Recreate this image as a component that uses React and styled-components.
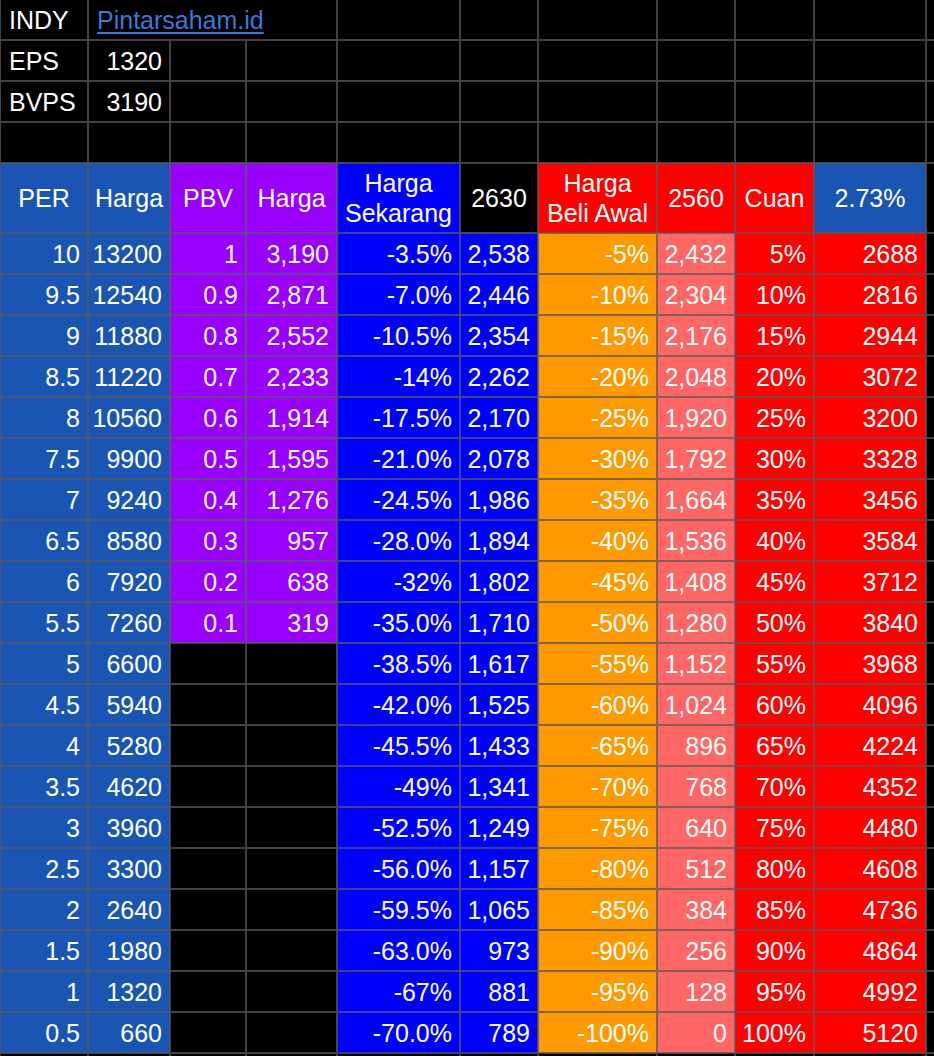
import styled, { createGlobalStyle } from "styled-components";

const GlobalStyle = createGlobalStyle`
  html, body {
    margin: 0;
    padding: 0;
    background: #000;
    overflow: hidden;
  }
`;

const COLORS = {
  steel: "#1b55b4",
  purple: "#9900ff",
  blue: "#0000ff",
  orange: "#ff9900",
  salmon: "#ff6666",
  red: "#ff0000",
  black: "#000000",
};

const per = ["10", "9.5", "9", "8.5", "8", "7.5", "7", "6.5", "6", "5.5", "5", "4.5", "4", "3.5", "3", "2.5", "2", "1.5", "1", "0.5"];
const hargaPer = ["13200", "12540", "11880", "11220", "10560", "9900", "9240", "8580", "7920", "7260", "6600", "5940", "5280", "4620", "3960", "3300", "2640", "1980", "1320", "660"];
const pbv = ["1", "0.9", "0.8", "0.7", "0.6", "0.5", "0.4", "0.3", "0.2", "0.1"];
const hargaPbv = ["3,190", "2,871", "2,552", "2,233", "1,914", "1,595", "1,276", "957", "638", "319"];
const turun = ["-3.5%", "-7.0%", "-10.5%", "-14%", "-17.5%", "-21.0%", "-24.5%", "-28.0%", "-32%", "-35.0%", "-38.5%", "-42.0%", "-45.5%", "-49%", "-52.5%", "-56.0%", "-59.5%", "-63.0%", "-67%", "-70.0%"];
const hargaTurun = ["2,538", "2,446", "2,354", "2,262", "2,170", "2,078", "1,986", "1,894", "1,802", "1,710", "1,617", "1,525", "1,433", "1,341", "1,249", "1,157", "1,065", "973", "881", "789"];
const hargaBeli = ["2,432", "2,304", "2,176", "2,048", "1,920", "1,792", "1,664", "1,536", "1,408", "1,280", "1,152", "1,024", "896", "768", "640", "512", "384", "256", "128", "0"];

const Sheet = styled.div`
  display: grid;
  grid-template-columns: 88px 82px 76px 91px 123px 78px 119px 78px 79px 112px 40px;
  grid-template-rows: 41px 41px 41px 41px 70px repeat(21, 41px);
  margin-top: -1px;
  width: 966px;
  font-family: "Liberation Sans", Arial, sans-serif;
  font-size: 25px;
  color: #fff;
`;

const Cell = styled.div`
  box-sizing: border-box;
  display: flex;
  align-items: center;
  justify-content: ${(p) => (p.$align === "right" ? "flex-end" : p.$align === "center" ? "center" : "flex-start")};
  grid-column: ${(p) => (p.$span ? `span ${p.$span}` : "auto")};
  padding: 2px 7px 0 8px;
  border: 1px solid rgba(90, 90, 90, 0.75);
  background: ${(p) => COLORS[p.$bg] || COLORS.black};
  white-space: nowrap;
  overflow: hidden;
`;

const HeadCell = styled(Cell)`
  justify-content: center;
  text-align: center;
  line-height: 30px;
  padding: 0 2px;
`;

const Link = styled.a`
  color: #3c78d8;
  text-decoration: underline;
  text-underline-offset: 3px;
  text-decoration-thickness: 2px;
`;

const EmptyRow = ({ from }) =>
  Array.from({ length: 11 - from }, (_, i) => <Cell key={i} />);

const App = () => {
  return (
    <>
      <GlobalStyle />
      <Sheet>
        <Cell>INDY</Cell>
        <Cell $span={3}>
          <Link href="#">Pintarsaham.id</Link>
        </Cell>
        <EmptyRow from={4} />

        <Cell>EPS</Cell>
        <Cell $align="right">1320</Cell>
        <EmptyRow from={2} />

        <Cell>BVPS</Cell>
        <Cell $align="right">3190</Cell>
        <EmptyRow from={2} />

        <EmptyRow from={0} />

        <HeadCell $bg="steel">PER</HeadCell>
        <HeadCell $bg="steel">Harga</HeadCell>
        <HeadCell $bg="purple">PBV</HeadCell>
        <HeadCell $bg="purple">Harga</HeadCell>
        <HeadCell $bg="blue">
          Harga
          <br />
          Sekarang
        </HeadCell>
        <HeadCell>2630</HeadCell>
        <HeadCell $bg="red">
          Harga
          <br />
          Beli Awal
        </HeadCell>
        <HeadCell $bg="red">2560</HeadCell>
        <HeadCell $bg="red">Cuan</HeadCell>
        <HeadCell $bg="steel">2.73%</HeadCell>
        <Cell />

        {per.map((p, i) => {
          const hasPbv = i < pbv.length;
          return [
            <Cell key={`a${i}`} $bg="steel" $align="right">{p}</Cell>,
            <Cell key={`b${i}`} $bg="steel" $align="right">{hargaPer[i]}</Cell>,
            <Cell key={`c${i}`} $bg={hasPbv ? "purple" : "black"} $align="right">{hasPbv ? pbv[i] : ""}</Cell>,
            <Cell key={`d${i}`} $bg={hasPbv ? "purple" : "black"} $align="right">{hasPbv ? hargaPbv[i] : ""}</Cell>,
            <Cell key={`e${i}`} $bg="blue" $align="right">{turun[i]}</Cell>,
            <Cell key={`f${i}`} $bg="blue" $align="right">{hargaTurun[i]}</Cell>,
            <Cell key={`g${i}`} $bg="orange" $align="right">{`-${(i + 1) * 5}%`}</Cell>,
            <Cell key={`h${i}`} $bg="salmon" $align="right">{hargaBeli[i]}</Cell>,
            <Cell key={`i${i}`} $bg="red" $align="right">{`${(i + 1) * 5}%`}</Cell>,
            <Cell key={`j${i}`} $bg="red" $align="right">{2560 + (i + 1) * 128}</Cell>,
            <Cell key={`k${i}`} />,
          ];
        })}

        <EmptyRow from={0} />
      </Sheet>
    </>
  );
};

export default App;
